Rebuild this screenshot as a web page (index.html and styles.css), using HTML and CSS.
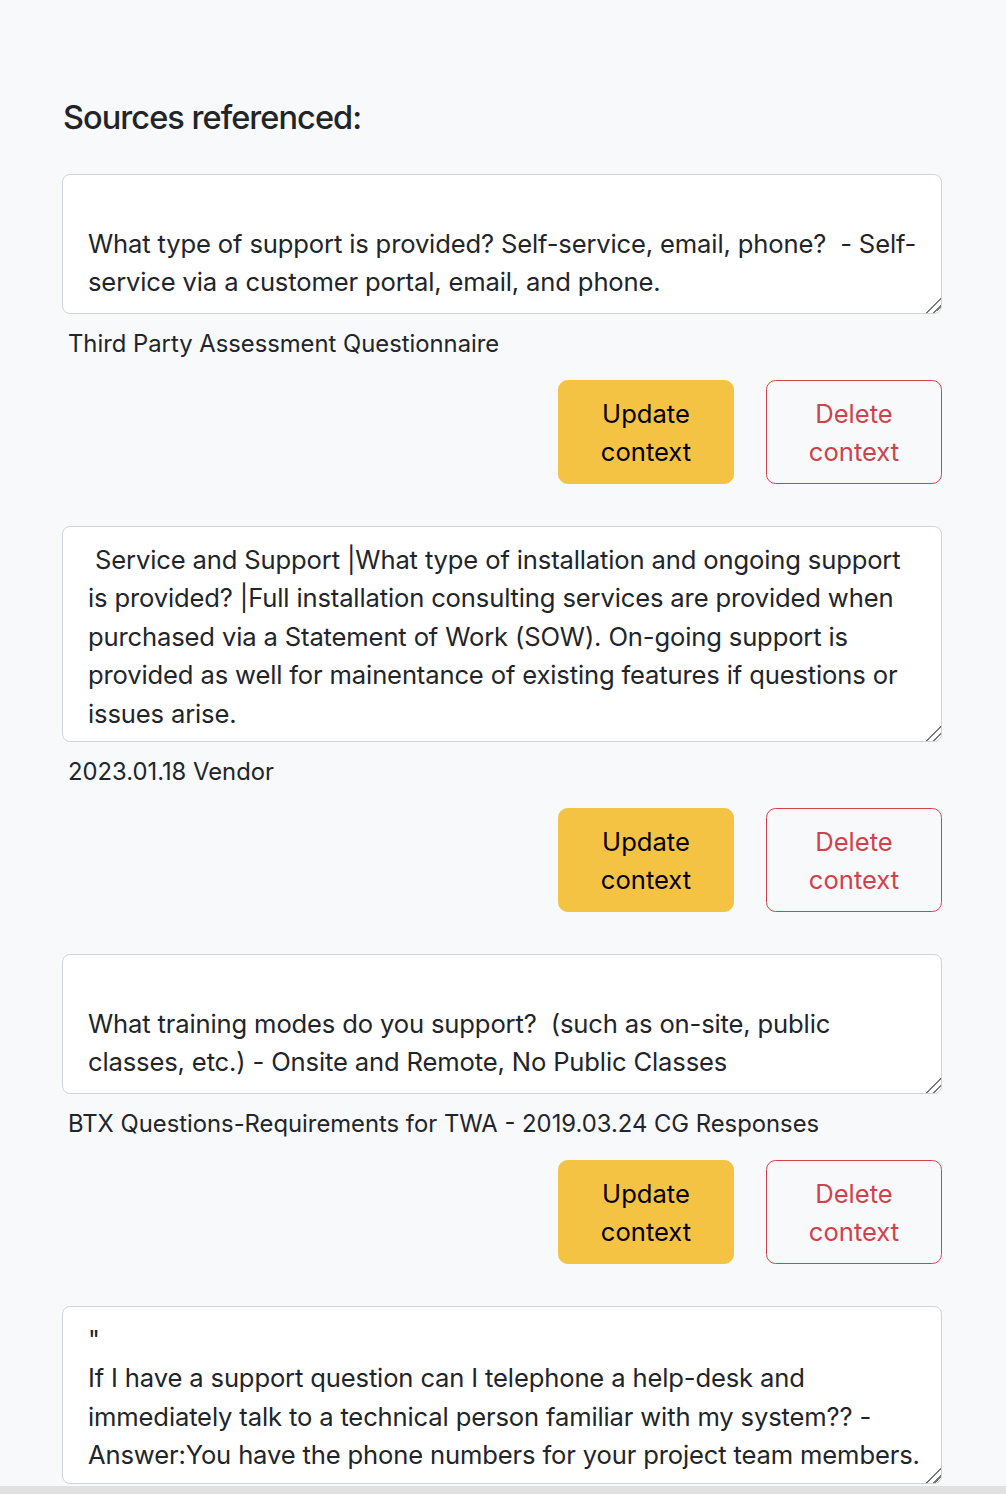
FILE: index.html
```html
<!DOCTYPE html>
<html lang="en">
<head>
<meta charset="utf-8">
<title>Sources referenced</title>
<link rel="stylesheet" href="styles.css">
</head>
<body>
<main class="page">
  <h4 class="title">Sources referenced:</h4>

  <section class="source">
    <textarea class="ctx rows-3">

What type of support is provided? Self-service, email, phone?  - Self-service via a customer portal, email, and phone.</textarea>
    <p class="src-name">Third Party Assessment Questionnaire</p>
    <div class="actions">
      <button class="btn btn-update">Update context</button>
      <button class="btn btn-delete">Delete context</button>
    </div>
  </section>

  <section class="source">
    <textarea class="ctx rows-5"> Service and Support |What type of installation and ongoing support is provided? |Full installation consulting services are provided when purchased via a Statement of Work (SOW). On-going support is provided as well for mainentance of existing features if questions or issues arise.</textarea>
    <p class="src-name">2023.01.18 Vendor</p>
    <div class="actions">
      <button class="btn btn-update">Update context</button>
      <button class="btn btn-delete">Delete context</button>
    </div>
  </section>

  <section class="source">
    <textarea class="ctx rows-3">

What training modes do you support?  (such as on-site, public classes, etc.) - Onsite and Remote, No Public Classes</textarea>
    <p class="src-name">BTX Questions-Requirements for TWA - 2019.03.24 CG Responses</p>
    <div class="actions">
      <button class="btn btn-update">Update context</button>
      <button class="btn btn-delete">Delete context</button>
    </div>
  </section>

  <section class="source last">
    <textarea class="ctx rows-4">"
If I have a support question can I telephone a help-desk and immediately talk to a technical person familiar with my system?? - Answer:You have the phone numbers for your project team members.</textarea>
  </section>
</main>
<div class="hscroll"></div>
</body>
</html>
```

FILE: styles.css
```css
html, body {
  margin: 0;
  padding: 0;
  background: #f8f9fa;
}

body {
  font-family: Inter, "Liberation Sans", sans-serif;
  color: #212529;
  height: 1494px;
  overflow: hidden;
}

.page {
  padding: 97px 64px 0 62px;
}

.title {
  margin: 0 0 34px 1px;
  font-size: 32.5px;
  font-weight: 500;
  letter-spacing: -0.95px;
  line-height: 42.8px;
}

.source {
  margin-bottom: 42px;
}

.source.last {
  margin-bottom: 0;
}

.ctx {
  display: block;
  box-sizing: border-box;
  width: 100%;
  margin: 0;
  padding: 11.5px 16px 10.4px 25px;
  font-family: inherit;
  font-size: 25.6px;
  letter-spacing: -0.15px;
  line-height: 38.5px;
  color: #212529;
  background: #fff;
  border: 1.6px solid #ced4da;
  border-radius: 8px;
  resize: vertical;
  overflow: hidden;
}

.ctx::-webkit-resizer {
  background:
    linear-gradient(135deg, transparent 48%, #777 48%, #777 56%, transparent 56%, transparent 72%, #777 72%, #777 80%, transparent 80%);
}

.rows-3 { height: 140px; }
.rows-4 { height: 178px; padding-top: 14px; }
.rows-5 { height: 216px; padding-top: 14px; }

.src-name {
  margin: 13px 0 0;
  padding-left: 6px;
  font-size: 23.8px;
  line-height: 33.6px;
}

.actions {
  display: flex;
  justify-content: flex-end;
  gap: 32px;
  margin-top: 19.4px;
}

.btn {
  box-sizing: border-box;
  width: 176px;
  height: 104px;
  padding: 13.5px 19.2px 10.5px;
  font-family: inherit;
  font-size: 25.6px;
  line-height: 38.4px;
  text-align: center;
  border-radius: 9.6px;
  border: 1.6px solid transparent;
  cursor: pointer;
}

.btn-update {
  background: #f5c344;
  border-color: #f5c344;
  color: #000;
}

.btn-delete {
  background: transparent;
  border-color: #cf424b;
  color: #cf424b;
}

.hscroll {
  position: fixed;
  left: 0;
  right: 0;
  bottom: 0;
  height: 8px;
  background: #e0e1e2;
}
```
